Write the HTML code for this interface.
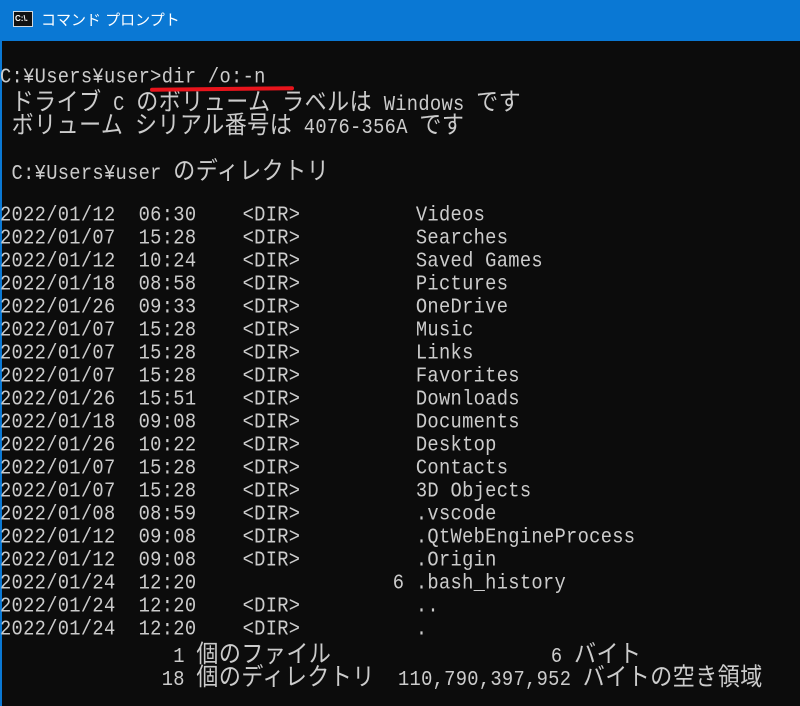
<!DOCTYPE html>
<html><head><meta charset="utf-8"><style>
body{margin:0;width:800px;height:706px;overflow:hidden;background:#0c0c0c;position:relative}
#tb{position:absolute;left:0;top:0;width:800px;height:41px;background:#0a78d4}
#lb{position:absolute;left:0;top:41px;width:2px;height:665px;background:#0a78d4}
#ic{position:absolute;left:13px;top:11px;width:18px;height:14px;background:#111;border:1px solid #cfd8e0;color:#fff;font:bold 8px "Liberation Sans",sans-serif;line-height:13px;text-indent:1px}
#tt{position:absolute;left:41px;top:9px;color:#fff;font:15px "Liberation Sans","Noto Sans CJK JP",sans-serif}
.l{position:absolute;left:0;height:23px;white-space:pre;color:#cccccc;font-family:"Liberation Mono","Noto Sans CJK JP",monospace;font-size:18.75px;letter-spacing:0.3px;line-height:23px;transform:scaleY(1.12);transform-origin:left center}
.j{font-size:22px;line-height:23px;font-family:"Noto Sans CJK JP",sans-serif;letter-spacing:0.5px}
#ul{position:absolute;left:150px;top:87px;width:144px;height:4px;background:#e8141c;border-radius:2px;transform:rotate(-0.6deg)}
</style></head><body>
<div id="tb"></div><div id="lb"></div>
<div id="ic">C:\.</div>
<div id="tt">コマンド プロンプト</div>
<div class="l" style="top:66px">C:¥Users¥user&gt;dir /o:-n</div>
<div class="l" style="top:89px"> <span class="j">ドライブ</span> C <span class="j">のボリューム</span> <span class="j">ラベルは</span> Windows <span class="j">です</span></div>
<div class="l" style="top:112px"> <span class="j">ボリューム</span> <span class="j">シリアル番号は</span> 4076-356A <span class="j">です</span></div>
<div class="l" style="top:158px"> C:¥Users¥user <span class="j">のディレクトリ</span></div>
<div class="l" style="top:204px">2022/01/12  06:30    &lt;DIR&gt;          Videos</div>
<div class="l" style="top:227px">2022/01/07  15:28    &lt;DIR&gt;          Searches</div>
<div class="l" style="top:250px">2022/01/12  10:24    &lt;DIR&gt;          Saved Games</div>
<div class="l" style="top:273px">2022/01/18  08:58    &lt;DIR&gt;          Pictures</div>
<div class="l" style="top:296px">2022/01/26  09:33    &lt;DIR&gt;          OneDrive</div>
<div class="l" style="top:319px">2022/01/07  15:28    &lt;DIR&gt;          Music</div>
<div class="l" style="top:342px">2022/01/07  15:28    &lt;DIR&gt;          Links</div>
<div class="l" style="top:365px">2022/01/07  15:28    &lt;DIR&gt;          Favorites</div>
<div class="l" style="top:388px">2022/01/26  15:51    &lt;DIR&gt;          Downloads</div>
<div class="l" style="top:411px">2022/01/18  09:08    &lt;DIR&gt;          Documents</div>
<div class="l" style="top:434px">2022/01/26  10:22    &lt;DIR&gt;          Desktop</div>
<div class="l" style="top:457px">2022/01/07  15:28    &lt;DIR&gt;          Contacts</div>
<div class="l" style="top:480px">2022/01/07  15:28    &lt;DIR&gt;          3D Objects</div>
<div class="l" style="top:503px">2022/01/08  08:59    &lt;DIR&gt;          .vscode</div>
<div class="l" style="top:526px">2022/01/12  09:08    &lt;DIR&gt;          .QtWebEngineProcess</div>
<div class="l" style="top:549px">2022/01/12  09:08    &lt;DIR&gt;          .Origin</div>
<div class="l" style="top:572px">2022/01/24  12:20                 6 .bash_history</div>
<div class="l" style="top:595px">2022/01/24  12:20    &lt;DIR&gt;          ..</div>
<div class="l" style="top:618px">2022/01/24  12:20    &lt;DIR&gt;          .</div>
<div class="l" style="top:641px">               1 <span class="j">個のファイル</span>                   6 <span class="j">バイト</span></div>
<div class="l" style="top:664px">              18 <span class="j">個のディレクトリ</span>  110,790,397,952 <span class="j">バイトの空き領域</span></div>
<div id="ul"></div>
</body></html>
